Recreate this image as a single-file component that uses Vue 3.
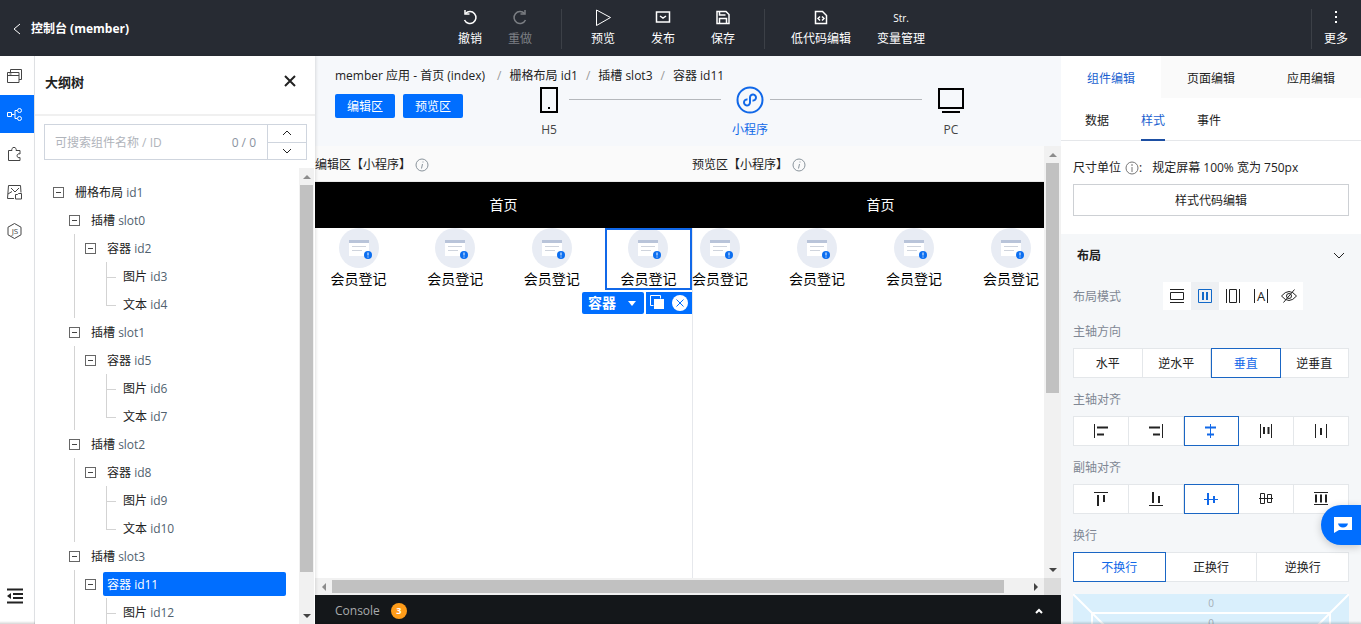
<script setup>
import { ref } from 'vue'

const query = ref('')

const actions = [
  [
    { label: '撤销', icon: 'undo' },
    { label: '重做', icon: 'redo', disabled: true },
  ],
  [
    { label: '预览', icon: 'play' },
    { label: '发布', icon: 'publish' },
    { label: '保存', icon: 'save' },
  ],
  [
    { label: '低代码编辑', icon: 'code' },
    { label: '变量管理', icon: 'str' },
  ],
]

const slots = [
  { id: 'slot0', box: 'id2', leaves: [['图片', 'id3'], ['文本', 'id4']] },
  { id: 'slot1', box: 'id5', leaves: [['图片', 'id6'], ['文本', 'id7']] },
  { id: 'slot2', box: 'id8', leaves: [['图片', 'id9'], ['文本', 'id10']] },
  { id: 'slot3', box: 'id11', leaves: [['图片', 'id12'], ['文本', 'id13']] },
]
const selected = ref('id11')

const crumbs = ['member 应用 - 首页 (index)', '栅格布局 id1', '插槽 slot3', '容器 id11']
const editors = ['组件编辑', '页面编辑', '应用编辑']
const editor = ref('组件编辑')
const tabs = ['数据', '样式', '事件']
const tab = ref('样式')

const modes = ['block', 'flex', 'inline-block', 'inline', 'none']
const mode = ref('flex')
const directions = ['水平', '逆水平', '垂直', '逆垂直']
const direction = ref('垂直')
const wraps = ['不换行', '正换行', '逆换行']
const wrap = ref('不换行')

const mainAlign = [
  { name: '起点', thin: 'M1.5 1v14', bold: 'M4 4.5h11M4 11.5h7' },
  { name: '终点', thin: 'M14.5 1v14', bold: 'M1 4.5h11M5 11.5h7' },
  { name: '居中', thin: 'M7.5 1v14', bold: 'M2 4.5h11M4 11.5h7' },
  { name: '两端', thin: 'M2.5 1v14M13.5 1v14', bold: 'M6 4v7M10.5 4v7' },
  { name: '环绕', thin: 'M2.5 1v14M13.5 1v14', bold: 'M8 5v7' },
]
const mainPick = ref('居中')
const crossAlign = [
  { name: '顶部', thin: 'M1 1.5h14', bold: 'M5 4v11M11 4v7' },
  { name: '底部', thin: 'M1 14.5h14', bold: 'M5 1v11M11 5v7' },
  { name: '居中', thin: 'M1 8.5h14', bold: 'M5 2v12M11 5v7' },
  { name: '基线', thin: 'M1 7.5h14M2.5 2.5h4v10h-4zM9.5 3.5h4v8h-4z', bold: '' },
  { name: '拉伸', thin: 'M1 1.5h14M1 13.5h14', bold: 'M3 3.5v8M8 3.5v8M13 3.5v8' },
]
const crossPick = ref('居中')
</script>

<template>
  <div class="app">
    <header class="topbar">
      <a class="brand" href="#">
        <svg width="10" height="12" viewBox="0 0 10 12"><path d="M8 1L2 6l6 5" /></svg>
        控制台 (member)
      </a>
      <nav class="actions" aria-label="操作">
        <div v-for="(group, g) in actions" :key="g" class="group" :class="'g' + g">
          <button v-for="a in group" :key="a.label" type="button" :disabled="a.disabled" class="action">
            <span v-if="a.icon === 'str'" class="str">Str.</span>
            <svg v-else width="18" height="18" viewBox="0 0 18 18">
              <g v-if="a.icon === 'undo'"><path d="M4.500 4.500A6 6 0 1 1 3.500 11" /><path d="M4 1v4h4.500" /></g>
              <g v-if="a.icon === 'redo'"><path d="M13.500 4.500A6 6 0 1 0 14.500 11" /><path d="M14 1v4H9.500" /></g>
              <path v-if="a.icon === 'play'" class="slim" d="M2.500 1l14 7.500-14 8z" />
              <g v-if="a.icon === 'publish'"><path d="M2.500 3h13v10h-13z" /><path d="M6 7l3 2 3-2" /></g>
              <g v-if="a.icon === 'save'"><path d="M3 2.500h9l3 3v9H3z" /><path d="M5.500 2.500v3.500h6M5.500 14.500v-5h7v5" /></g>
              <g v-if="a.icon === 'code'"><path d="M3.500 2.500h7l4 4v8h-11z" /><path d="M8 7.500l-2 2 2 2M10 7.500l2 2-2 2" /></g>
            </svg>
            <span>{{ a.label }}</span>
          </button>
        </div>
      </nav>
      <div class="more">
        <button type="button" class="action">
          <svg width="18" height="18" viewBox="0 0 18 18"><path class="solid" d="M8 2h2v2H8zM8 7h2v2H8zM8 12h2v2H8z" /></svg>
          <span>更多</span>
        </button>
      </div>
    </header>

    <div class="body">
      <nav class="rail" aria-label="面板">
        <button type="button" aria-label="页面">
          <svg width="18" height="18" viewBox="0 0 18 18"><path d="M1.5 6.500h11.500v10h-11.500zM1.500 9.500h11.500M4.500 6.500v-3h11v10h-2.500M3.500 8h2" /></svg>
        </button>
        <button type="button" aria-label="大纲树" class="on">
          <svg width="18" height="18" viewBox="0 0 18 18"><path d="M1.500 7.500h4v4h-4zM5.500 9.500h3M11 5.500h-2v8h2" /><circle cx="13.500" cy="5.500" r="2" /><circle cx="13.500" cy="13.500" r="2" /></svg>
        </button>
        <button type="button" aria-label="组件">
          <svg width="18" height="18" viewBox="0 0 18 18"><path d="M2.500 6.500h3.500a2.200 2.200 0 1 1 4 0h4v3.500a2 2 0 1 0 0 3.500v3h-11.500z" /></svg>
        </button>
        <button type="button" aria-label="资源">
          <svg width="18" height="18" viewBox="0 0 18 18"><path d="M8 15.500H1.500l1-13h12l.5 7M5 5l4 4 4-4M2 11l4-2.500M9.500 11.500h2l1-1h3v5.500h-6z" /></svg>
        </button>
        <button type="button" aria-label="脚本">
          <svg width="18" height="18" viewBox="0 0 18 18"><path d="M8.500 1.500l6.500 3.700v7.600l-6.500 3.700-6.500-3.700V5.200z" /><text x="9" y="12">JS</text></svg>
        </button>
        <button type="button" aria-label="收起" class="fold">
          <svg width="18" height="18" viewBox="0 0 18 18"><path d="M1 2.500h16M7 7h10M7 11h10M1 15.500h16" /><path class="solid" d="M1 9l4-3v6z" /></svg>
        </button>
      </nav>

      <aside class="outline">
        <div class="outline-head">
          <h2>大纲树</h2>
          <button type="button" aria-label="关闭"><svg width="12" height="12" viewBox="0 0 12 12"><path d="M1 1l10 10M11 1L1 11" /></svg></button>
        </div>
        <div class="search">
          <input v-model="query" type="text" aria-label="搜索组件" placeholder="可搜索组件名称 / ID" />
          <span class="count">0 / 0</span>
          <div class="steppers">
            <button type="button" aria-label="上一个"><svg width="10" height="6" viewBox="0 0 10 6"><path d="M1 5l4-4 4 4" /></svg></button>
            <button type="button" aria-label="下一个"><svg width="10" height="6" viewBox="0 0 10 6"><path d="M1 1l4 4 4-4" /></svg></button>
          </div>
        </div>
        <div class="tree-wrap">
          <ul class="tree">
            <li>
              <div class="row"><button type="button" class="toggle" aria-label="折叠"></button><span class="node">栅格布局 <em>id1</em></span></div>
              <ul>
                <li v-for="s in slots" :key="s.id">
                  <div class="row"><button type="button" class="toggle" aria-label="折叠"></button><span class="node">插槽 <em>{{ s.id }}</em></span></div>
                  <ul class="lined">
                    <li>
                      <div class="row">
                        <button type="button" class="toggle" aria-label="折叠"></button>
                        <span class="node" :class="{ picked: s.box === selected }">容器 <em>{{ s.box }}</em></span>
                      </div>
                      <ul class="leaves">
                        <li v-for="l in s.leaves" :key="l[1]" class="row"><span class="node">{{ l[0] }} <em>{{ l[1] }}</em></span></li>
                      </ul>
                    </li>
                  </ul>
                </li>
              </ul>
            </li>
          </ul>
          <div class="vbar">
            <i class="up"></i><i class="thumb"></i><i class="rest"></i><i class="down"></i>
          </div>
        </div>
      </aside>

      <main class="stage">
        <div class="stage-head">
          <nav class="crumbs" aria-label="路径">
            <a v-for="c in crumbs" :key="c" href="#">{{ c }}</a>
          </nav>
          <div class="stage-tools">
            <button type="button" class="primary">编辑区</button>
            <button type="button" class="primary">预览区</button>
            <div class="devices">
              <button type="button">
                <svg width="28" height="28" viewBox="0 0 28 28"><path d="M6 2h16v24H6z" /><path class="solid" d="M13 21h2v2h-2z" /></svg>
                H5
              </button>
              <hr />
              <button type="button" class="on">
                <svg width="28" height="28" viewBox="0 0 28 28"><circle cx="14" cy="14" r="12.500" /><path d="M11.500 13.500a3 3 0 1 0 2.500 3v-5a3 3 0 1 1 2.500 3" /></svg>
                小程序
              </button>
              <hr />
              <button type="button">
                <svg width="28" height="28" viewBox="0 0 28 28"><path d="M2 3h24v19H2zM5 26h18" /></svg>
                PC
              </button>
            </div>
          </div>
        </div>

        <div class="canvas">
          <div class="viewport">
            <section class="phone edit">
              <h3>编辑区【小程序】
                <svg class="info" width="14" height="14" viewBox="0 0 14 14"><circle cx="7" cy="7" r="6" /><path d="M7.500 6l-1 4.500M8 3.500v1" /></svg>
              </h3>
              <div class="screen">
                <div class="nav">首页</div>
                <div class="cells">
                  <div v-for="n in 4" :key="n" class="cell" :class="{ chosen: n === 4 }">
                    <svg width="40" height="40" viewBox="0 0 40 40">
                      <circle class="disc" cx="20" cy="20" r="20" /><path class="paper" d="M10 14h20v14H10z" /><path class="band" d="M10 12h20v3H10z" />
                      <path class="rule" d="M13 18.500h14M13 22.500h10" /><circle class="dot" cx="29" cy="27" r="4" /><path class="mark" d="M29 24.500v3M29 28.500v1" />
                    </svg>
                    <span>会员登记</span>
                    <div v-if="n === 4" class="pickbar">
                      <button type="button" class="pick">容器<svg width="8" height="5" viewBox="0 0 8 5"><path d="M0 0h8L4 5z" /></svg></button>
                      <span class="pick-tools">
                        <button type="button" aria-label="复制"><svg width="16" height="16" viewBox="0 0 16 16"><path class="edge" d="M10.500 3.500V.5H.5V10.500h3" /><path d="M4 4h10v10H4z" /></svg></button>
                        <button type="button" aria-label="删除"><svg width="16" height="16" viewBox="0 0 16 16"><circle cx="8" cy="8" r="8" /><path class="cross" d="M4.500 4.500l7 7M11.500 4.500l-7 7" /></svg></button>
                      </span>
                    </div>
                  </div>
                </div>
              </div>
            </section>
            <section class="phone preview">
              <h3>预览区【小程序】
                <svg class="info" width="14" height="14" viewBox="0 0 14 14"><circle cx="7" cy="7" r="6" /><path d="M7.500 6l-1 4.500M8 3.500v1" /></svg>
              </h3>
              <div class="screen">
                <div class="nav">首页</div>
                <div class="cells">
                  <div v-for="n in 4" :key="n" class="cell">
                    <svg width="40" height="40" viewBox="0 0 40 40">
                      <circle class="disc" cx="20" cy="20" r="20" /><path class="paper" d="M10 14h20v14H10z" /><path class="band" d="M10 12h20v3H10z" />
                      <path class="rule" d="M13 18.500h14M13 22.500h10" /><circle class="dot" cx="29" cy="27" r="4" /><path class="mark" d="M29 24.500v3M29 28.500v1" />
                    </svg>
                    <span>会员登记</span>
                  </div>
                </div>
              </div>
            </section>
          </div>
          <div class="vbar"><i class="up"></i><i class="thumb"></i><i class="rest"></i><i class="down"></i></div>
          <div class="hbar"><i class="left"></i><i class="thumb"></i><i class="rest"></i><i class="right"></i></div>
          <div class="corner"></div>
        </div>

        <footer class="console">
          <span>Console</span><b>3</b>
          <button type="button" aria-label="展开"><svg width="10" height="6" viewBox="0 0 10 6"><path d="M2 5l3-3 3 3" /></svg></button>
        </footer>
      </main>

      <aside class="props">
        <div class="editors">
          <button v-for="e in editors" :key="e" type="button" :class="{ on: e === editor }" @click="editor = e">{{ e }}</button>
        </div>
        <div class="tabs">
          <button v-for="t in tabs" :key="t" type="button" :class="{ on: t === tab }" @click="tab = t">{{ t }}</button>
        </div>
        <div class="unit">
          <p>尺寸单位
            <span class="hint"><svg class="info" width="14" height="14" viewBox="0 0 14 14"><circle cx="7" cy="7" r="6" /><path d="M7 6v5M7 3v2" /></svg>:</span>
            <span>规定屏幕 100% 宽为 750px</span>
          </p>
          <button type="button">样式代码编辑</button>
        </div>
        <section class="layout">
          <h2>布局 <svg width="12" height="8" viewBox="0 0 12 8"><path d="M1 1l5 5 5-5" /></svg></h2>
          <div class="mode">
            <span>布局模式</span>
            <div>
              <button v-for="m in modes" :key="m" type="button" :aria-label="m" :class="{ on: m === mode }" @click="mode = m">
                <svg width="16" height="16" viewBox="0 0 16 16">
                  <path v-if="m === 'block'" d="M1 1.500h14M1 14.500h14M1.500 4.500h13v7h-13z" />
                  <g v-if="m === 'flex'"><path d="M1.500 1.500h13v13h-13z" /><path class="bold" d="M6 4v8M10 4v8" /></g>
                  <path v-if="m === 'inline-block'" d="M1.500 1v14M14.500 1v14M4.500 1.500h7v13h-7z" />
                  <g v-if="m === 'inline'"><path d="M1.500 1v14M14.500 1v14" /><text x="8" y="13">A</text></g>
                  <g v-if="m === 'none'"><path d="M.5 8Q8-1 15.500 8 8 17 .5 8zM13.500 1.500L2.500 14.500" /><circle cx="8" cy="8" r="2.500" /></g>
                </svg>
              </button>
            </div>
          </div>
          <h4>主轴方向</h4>
          <div class="seg">
            <button v-for="d in directions" :key="d" type="button" :class="{ on: d === direction }" @click="direction = d">{{ d }}</button>
          </div>
          <h4>主轴对齐</h4>
          <div class="seg icons">
            <button v-for="a in mainAlign" :key="a.name" type="button" :aria-label="a.name" :class="{ on: a.name === mainPick }" @click="mainPick = a.name">
              <svg width="16" height="16" viewBox="0 0 16 16"><path :d="a.thin" /><path class="bold" :d="a.bold" /></svg>
            </button>
          </div>
          <h4>副轴对齐</h4>
          <div class="seg icons">
            <button v-for="a in crossAlign" :key="a.name" type="button" :aria-label="a.name" :class="{ on: a.name === crossPick }" @click="crossPick = a.name">
              <svg width="16" height="16" viewBox="0 0 16 16"><path :d="a.thin" /><path class="bold" :d="a.bold" /></svg>
            </button>
          </div>
          <h4>换行</h4>
          <div class="seg">
            <button v-for="w in wraps" :key="w" type="button" :class="{ on: w === wrap }" @click="wrap = w">{{ w }}</button>
          </div>
          <div class="boxmodel">
            <svg class="slash" width="36" height="36" viewBox="0 0 36 36"><path d="M0 0l36 36" /></svg>
            <svg class="slash flip" width="36" height="36" viewBox="0 0 36 36"><path d="M36 0L0 36" /></svg>
            <span>0</span>
            <div class="inner"><span>0</span></div>
          </div>
        </section>
      </aside>
    </div>
    <button type="button" class="chat" aria-label="客服">
      <svg width="18" height="18" viewBox="0 0 18 18"><path d="M0 1h18v13H5l-5 3z" /><path class="smile" d="M4 7.500h10q-1 4-5 4t-5-4z" /></svg>
    </button>
  </div>
</template>

<style>
html, body { margin: 0; background: #fff; }
</style>

<style scoped>
.app {
  position: relative; display: flex; flex-direction: column; height: 100vh; overflow: hidden;
  font: 12px/20px "Open Sans", "Noto Sans CJK SC", sans-serif; color: #222;
}
.app::after {
  content: ""; position: absolute; left: 0; right: 0; bottom: 0; height: 3px; pointer-events: none;
  background: linear-gradient(rgba(0, 0, 0, 0), rgba(0, 0, 0, .16));
}
.app * { box-sizing: border-box; }
button { font: inherit; color: inherit; background: none; border: 0; padding: 0; margin: 0; }
h2, h3, h4, p, ul { margin: 0; padding: 0; list-style: none; font-size: 12px; }
svg { display: block; flex: none; fill: none; stroke: currentColor; }
a { color: inherit; text-decoration: none; }

.topbar { flex: none; height: 56px; padding-top: 2px; display: grid; grid-template-columns: 1fr auto 1fr; align-items: center; background: #272b33; color: #fff; }
.brand { display: flex; align-items: center; gap: 9px; padding-left: 12px; font-weight: 700; }
.actions { display: flex; padding-left: 22px; }
.group { display: flex; gap: 26px; }
.group.g1 { gap: 36px; margin: 0 26px 0 29px; padding: 0 29px; border: solid #3c4047; border-width: 0 1px; }
.action { display: flex; flex-direction: column; align-items: center; gap: 2px; }
.action svg { stroke-width: 1.5; }
.action .slim { stroke-width: 1; }
.action .solid { fill: #fff; stroke: none; }
.action:disabled { color: #7b7e83; }
.str { height: 18px; font-size: 10px; line-height: 18px; }
.more { justify-self: end; margin-right: 13px; padding-left: 12px; border-left: 1px solid #3c4047; }

.body { flex: 1; min-height: 0; display: flex; }
.rail { flex: none; width: 35px; display: flex; flex-direction: column; gap: 1px; border-right: 1px solid #e3e5e8; color: #444; }
.rail button { height: 38px; width: 34px; display: grid; place-items: center; padding-right: 4px; }
.rail button.on { background: #006eff; color: #fff; }
.rail text { font-size: 8px; text-anchor: middle; fill: #444; stroke: none; }
.rail .fold { margin-top: auto; margin-bottom: 9px; color: #222; }
.rail .fold svg { stroke-width: 2; }
.rail .solid { fill: #222; stroke: none; }

.outline { flex: none; width: 280px; display: flex; flex-direction: column; box-shadow: 1px 0 3px rgba(0, 0, 0, .12); position: relative; z-index: 1; background: #fff; }
.outline-head { flex: none; height: 60px; display: flex; justify-content: space-between; padding: 16px 19px 0 10px; border-bottom: 2px solid #f0f0f0; }
.outline-head h2 { font-size: 13px; }
.outline-head button { height: 18px; }
.outline-head svg { stroke-width: 2; }
.search { flex: none; display: flex; align-items: center; height: 36px; margin: 8px 8px 8px 9px; border: 1px solid #cfd5de; }
.search input { flex: 1; min-width: 0; border: 0; outline: 0; padding: 2px 0 0 10px; font: inherit; background: none; }
.search input::placeholder { color: #b0b4bb; }
.count { padding-top: 2px; color: #8b93a1; margin-right: 11px; }
.steppers { width: 39px; height: 34px; display: flex; flex-direction: column; border-left: 1px solid #cfd5de; }
.steppers button { flex: 1; display: grid; place-items: center; }
.steppers button + button { border-top: 1px solid #cfd5de; }
.tree-wrap { flex: 1; min-height: 0; display: flex; overflow: hidden; }
.tree { flex: 1; padding: 10px 13px 0 18px; }
.tree ul { padding-left: 16px; }
.row { display: flex; align-items: center; height: 28px; }
.toggle { flex: none; width: 11px; height: 11px; margin-right: 7px; border: 1px solid #666; display: grid; place-items: center; }
.toggle::after { content: ""; width: 5px; height: 1px; background: #444; }
.node { flex: 1; line-height: 22px; padding: 2px 0 0 4px; border-radius: 2px; }
.node em { font-style: normal; color: #51626f; }
.node.picked, .node.picked em { background: #006eff; color: #fff; }
.tree .lined { margin-left: 5px; padding-left: 10px; border-left: 1px solid #d3d3d3; }
.tree .leaves { padding-left: 21px; }
.leaves .row { position: relative; padding-left: 13px; }
.leaves .row::before { content: ""; position: absolute; left: 0; top: 0; width: 9px; height: 15px; border: solid #d3d3d3; border-width: 0 0 1px 1px; }
.leaves .row:not(:last-child)::after { content: ""; position: absolute; left: 0; top: 14px; height: 14px; border-left: 1px solid #d3d3d3; }

.vbar { flex: none; width: 17px; display: flex; flex-direction: column; align-items: center; background: #f1f1f1; }
.vbar i, .hbar i { display: grid; place-items: center; flex: none; }
.vbar .up, .vbar .down { height: 17px; }
.vbar .up::after { content: ""; border: 4px solid transparent; border-top: 0; border-bottom-color: #8c8c8c; }
.vbar .down::after { content: ""; border: 4px solid transparent; border-bottom: 0; border-top-color: #444; }
.vbar .thumb { width: 13px; background: #c1c1c1; }
.outline .thumb { flex: 387; }
.outline .rest { flex: 35; }
.outline .vbar { margin-right: 1px; width: 15px; }
.canvas .vbar .thumb { flex: 230; }
.canvas .vbar .rest { flex: 168; }
.hbar { display: flex; align-items: center; background: #f1f1f1; }
.hbar .left, .hbar .right { width: 17px; }
.hbar .left::after { content: ""; border: 4px solid transparent; border-left: 0; border-right-color: #8c8c8c; }
.hbar .right::after { content: ""; border: 4px solid transparent; border-right: 0; border-left-color: #444; }
.hbar .thumb { height: 13px; background: #c1c1c1; flex: 672; }
.hbar .rest { flex: 23; }

.stage { flex: 1; min-width: 0; display: flex; flex-direction: column; background: #f6f8fb; }
.stage-head { flex: none; height: 90px; padding: 10px 20px 0; }
.crumbs { display: flex; }
.crumbs a + a::before { content: "/"; color: #999; margin: 0 8px; }
.crumbs a:first-child { margin-right: 4px; }
.stage-tools { display: flex; align-items: flex-start; gap: 8px; }
.primary { width: 60px; height: 24px; padding-top: 2px; margin-top: 8px; border-radius: 2px; background: #006eff; color: #fff; }
.devices { flex: 1; display: flex; margin: 0 70px 0 58px; color: #444; }
.devices button { width: 40px; display: flex; flex-direction: column; align-items: center; gap: 6px; }
.devices svg { stroke: #000; stroke-width: 2; }
.devices .solid { fill: #000; stroke: none; }
.devices .on { color: #1168e8; }
.devices .on svg { stroke: #1168e8; }
.devices hr { flex: 1; height: 1px; border: 0; margin: 13px 9px 0 0; background: #b5b8bc; }

.canvas { flex: 1; min-height: 0; display: grid; grid-template: minmax(0, 1fr) 17px / minmax(0, 1fr) 17px; }
.viewport { display: flex; overflow: hidden; background: #fff; }
.corner { background: #dcdcdc; }
.phone { flex: none; width: 377px; display: flex; flex-direction: column; }
.phone h3 { flex: none; height: 36px; padding-top: 2px; display: flex; align-items: center; gap: 4px; background: #fafafa; font-weight: 400; border-bottom: 1px solid #e8e8e8; }
.info { color: #8a949c; }
.screen { flex: 1; display: flex; flex-direction: column; }
.preview .cells { box-shadow: inset 1px 0 #e6e8ec; }
.nav { height: 46px; line-height: 46px; text-align: center; background: #000; color: #fff; font-size: 14px; }
.cells { flex: 1; display: flex; justify-content: space-between; }
.cell { position: relative; width: 87px; height: 62px; display: flex; flex-direction: column; align-items: center; font-size: 14px; line-height: 22px; color: #000; white-space: nowrap; }
.preview .cells { justify-content: flex-start; gap: 41px; }
.preview .cell { width: 56px; }
.chosen::after { content: ""; position: absolute; inset: 0; border: 2px solid #1168e8; }
.disc { fill: #e8ecf4; stroke: none; }
.paper { fill: #fff; stroke: none; }
.band { fill: #b9c4d9; stroke: none; }
.rule { stroke: #cfd4dd; }
.dot { fill: #0b6ef0; stroke: none; }
.mark { stroke: #fff; }
.pickbar { position: absolute; z-index: 1; top: 64px; right: 0; display: flex; gap: 2px; height: 22px; color: #fff; }
.pickbar svg { fill: #fff; stroke: none; }
.pick { display: flex; align-items: center; justify-content: space-between; width: 62px; padding: 0 8px 0 6px; background: #006eff; border-radius: 2px; font-weight: 700; }
.pick-tools { display: flex; align-items: center; gap: 6px; padding: 0 4px; background: #006eff; }
.pickbar .edge { fill: none; stroke: #fff; }
.pickbar .cross { fill: none; stroke: #006eff; stroke-width: 1; }

.console { flex: none; height: 29px; display: flex; align-items: center; padding: 2px 17px 0 20px; background: #14171a; color: #a9abad; font-weight: 500; }
.console b { width: 16px; height: 16px; margin-left: 11px; border-radius: 8px; background: #ff9c19; color: #fff; font-size: 9px; line-height: 16px; text-align: center; }
.console button { margin-left: auto; color: #fff; }
.console svg { stroke-width: 2; }

.props { flex: none; width: 300px; display: flex; flex-direction: column; background: #fff; overflow: hidden; }
.editors { flex: none; display: flex; height: 42px; }
.editors button { flex: 1; background: #fafafa; padding-top: 4px; }
.editors .on { background: #fff; color: #1a5fd0; }
.tabs { flex: none; display: flex; gap: 32px; height: 43px; padding: 0 24px; border-bottom: 1px solid #e5e7ea; }
.tabs button { height: 43px; padding-top: 4px; border-bottom: 2px solid transparent; }
.tabs .on { color: #1a5fd0; border-color: #1d4fa3; }
.unit { flex: none; padding: 17px 12px 18px; }
.unit p { display: flex; align-items: center; gap: 4px; }
.hint { display: flex; align-items: center; }
.unit .info { color: #777; }
.unit .hint + span { margin-left: 6px; }
.unit button { width: 100%; height: 32px; margin-top: 6px; padding-top: 2px; border: 1px solid #cdd0d4; }
.layout { flex: 1; padding: 12px 12px 0; background: #f5f7f9; }
.layout h2 { display: flex; align-items: center; justify-content: space-between; padding: 0 4px; }
.mode { display: flex; align-items: center; margin-top: 16px; color: #7f8794; }
.mode > span { padding-top: 2px; }
.mode > div { display: flex; margin-left: auto; margin-right: 46px; color: #222; }
.mode button { width: 28px; height: 28px; display: grid; place-items: center; background: #fff; }
.mode button.on { background: #eef0f3; color: #1168c8; }
.mode text { font-size: 13px; text-anchor: middle; fill: #222; stroke: none; }
.bold { stroke-width: 2; }
.layout h4 { padding: 12px 0 6px; font-weight: 400; color: #7f8794; }
.seg { display: flex; height: 30px; }
.seg button { flex: 1; display: grid; place-items: center; padding-top: 2px; background: #fff; border: 1px solid #e4e7ea; border-left-width: 0; }
.seg.icons button { padding-top: 0; }
.seg button:first-child { border-left-width: 1px; }
.seg .on { border: 1px solid #1a66c4; color: #1168e8; }
.boxmodel { position: relative; margin-top: 12px; padding: 0 18px; height: 120px; background: #d9effc; text-align: center; font-size: 10px; line-height: 18px; color: #a3adb5; }
.boxmodel > span { display: block; }
.inner { height: 80px; border: 2px solid #fff; }
.inner span { display: block; }
.slash { position: absolute; left: 0; top: 0; stroke: #fff; stroke-width: 2; }
.slash.flip { left: auto; right: 0; }

.chat { position: absolute; right: 0; bottom: 79px; width: 40px; height: 40px; padding-left: 13px; border-radius: 20px 0 0 20px; background: #006eff; box-shadow: 0 2px 8px rgba(0, 0, 0, .2); }
.chat svg { fill: #fff; stroke: none; }
.chat .smile { fill: #006eff; }
</style>
